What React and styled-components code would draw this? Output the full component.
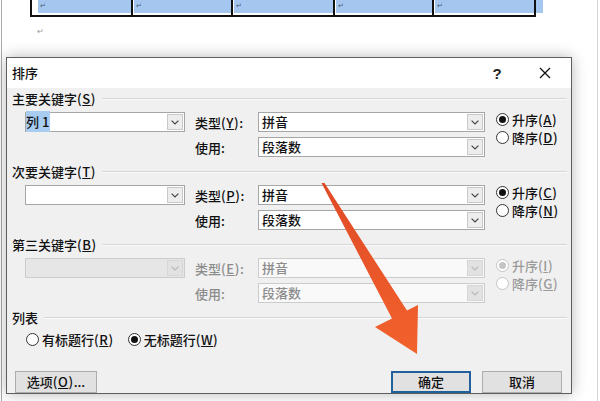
import React from "react";
import styled, { createGlobalStyle } from "styled-components";

const FONT = `"Noto Sans CJK SC", "Noto Sans CJK JP", "Noto Sans", sans-serif`;

const Global = createGlobalStyle`
  html, body { margin: 0; padding: 0; background: #fff; }
  body { font-family: ${FONT}; }
`;

const Page = styled.div`
  position: relative;
  width: 600px;
  height: 401px;
  overflow: hidden;
  background: #fff;
`;

const Paper = styled.div`
  box-sizing: border-box;
  height: 100%;
  margin: 0 2px 0 1px;
  border-left: 1px solid #a8a8a8;
  border-right: 1px solid #d4d4d4;
`;

const DocRow = styled.div`
  display: flex;
  margin-left: 28px;
  height: 17px;
`;

const DocCell = styled.div`
  box-sizing: border-box;
  width: ${(p) => p.$w}px;
  border-bottom: 2px solid #111;
  border-right: 2px solid #111;
  ${(p) => (p.$first ? "border-left: 2px solid #111;" : "")}
  padding: 0 0 2px ${(p) => (p.$first ? 6 : 1)}px;
`;

const CellFill = styled.div`
  height: 13px;
  background: #a4c6ef;
  font-size: 7px;
  line-height: 11px;
  color: #4a5a70;
  padding-left: 2px;
`;

const RowEnd = styled.div`
  width: 7px;
  height: 13px;
  background: #a4c6ef;
`;

const ParaMark = styled.div`
  margin: 9px 0 0 35px;
  font-size: 8px;
  line-height: 10px;
  color: #9a9a9a;
`;

const Dialog = styled.div`
  position: absolute;
  left: 6px;
  top: 57px;
  width: 566px;
  height: 337px;
  box-sizing: border-box;
  border: 1px solid #5e5e5e;
  background: #f0f0f0;
  box-shadow: 0 0 14px rgba(0, 0, 0, 0.28);
  display: flex;
  flex-direction: column;
  font-family: ${FONT};
  font-size: 13px;
  font-weight: 500;
  color: #111;
`;

const TitleBar = styled.div`
  height: 30px;
  flex: none;
  display: flex;
  align-items: center;
  background: #fff;
  padding-left: 5px;
`;

const Title = styled.span`
  font-size: 13px;
  line-height: 16px;
`;

const TitleButtons = styled.div`
  margin-left: auto;
  margin-right: 2px;
  display: flex;
`;

const TitleButton = styled.div`
  width: 48px;
  height: 30px;
  display: flex;
  align-items: center;
  justify-content: center;
  font-size: 15px;
  font-weight: 700;
  font-family: "Liberation Sans", sans-serif;
  color: #222;
`;

const Body = styled.div`
  flex: 1;
  display: flex;
  flex-direction: column;
  padding: 3px 4px 6px 5px;
`;

const Section = styled.section`
  margin-bottom: 7px;
`;

const GroupHead = styled.div`
  display: flex;
  align-items: center;
  height: 16px;
  line-height: 16px;
  white-space: nowrap;
  &::after {
    content: "";
    flex: 1;
    margin-left: 6px;
    border-top: 1px solid #d6d6d6;
    border-bottom: 1px solid #fbfbfb;
  }
`;

const Accel = styled.span`
  letter-spacing: 0.6px;
`;

const KeyGrid = styled.div`
  display: grid;
  grid-template-columns: 13px 160px 73px 227px 1fr;
  grid-template-rows: 20px 20px;
  row-gap: 5px;
  margin-top: 5px;
`;

const Label = styled.div`
  grid-column: 3;
  grid-row: ${(p) => p.$row};
  display: flex;
  align-items: center;
  padding-left: 10px;
  white-space: nowrap;
  color: ${(p) => (p.$disabled ? "#8c8c8c" : "#111")};
`;

const Combo = styled.div`
  grid-column: ${(p) => p.$col};
  grid-row: ${(p) => p.$row};
  box-sizing: border-box;
  height: 20px;
  display: flex;
  border: 1px solid ${(p) => (p.$disabled ? "#cccccc" : "#a6a6a6")};
  background: ${(p) => (p.$disabled ? (p.$shade ? "#e6e6e6" : "#f9f9f9") : "#fff")};
`;

const ComboText = styled.div`
  flex: 1;
  padding-left: ${(p) => p.$pad ?? 3}px;
  line-height: 18px;
  white-space: nowrap;
  color: ${(p) => (p.$disabled ? "#8c8c8c" : "#111")};
`;

const Selected = styled.span`
  background: #a9ccf1;
  padding: 1px 1px 1px 0;
`;

const DropButton = styled.div`
  box-sizing: border-box;
  width: 16px;
  margin: 1px 1px 1px 0;
  border: 1px solid ${(p) => (p.$disabled ? "#d6d6d6" : "#c9c9c9")};
  background: ${(p) => (p.$disabled ? "#e2e2e2" : "#ededed")};
  display: flex;
  align-items: center;
  justify-content: center;
`;

const RadioCol = styled.div`
  grid-column: 5;
  grid-row: 1 / 3;
  padding-left: 11px;
  margin-top: -2px;
  display: flex;
  flex-direction: column;
`;

const RadioItem = styled.div`
  height: 18px;
  display: flex;
  align-items: center;
  gap: 3px;
  white-space: nowrap;
  color: ${(p) => (p.$disabled ? "#9a9a9a" : "#111")};
`;

const RadioCircle = styled.span`
  box-sizing: border-box;
  width: 13px;
  height: 13px;
  flex: none;
  border-radius: 50%;
  border: 1px solid ${(p) => (p.$disabled ? "#c4c4c4" : "#333")};
  background: #fff;
  display: flex;
  align-items: center;
  justify-content: center;
  &::after {
    content: "";
    display: ${(p) => (p.$checked ? "block" : "none")};
    width: 7px;
    height: 7px;
    border-radius: 50%;
    background: ${(p) => (p.$disabled ? "#c4c4c4" : "#111")};
  }
`;

const RadioRow = styled.div`
  display: flex;
  gap: 14px;
  margin-top: 4px;
  padding-left: 14px;
  height: 16px;
`;

const ButtonRow = styled.div`
  margin-top: 18px;
  display: flex;
  justify-content: space-between;
  padding: 0 5px 0 3px;
`;

const ButtonGroup = styled.div`
  display: flex;
  gap: 11px;
`;

const Button = styled.button`
  box-sizing: border-box;
  height: 22px;
  width: ${(p) => p.$w}px;
  padding: 0;
  margin: 0;
  font-family: ${FONT};
  font-size: 13px;
  font-weight: 500;
  line-height: 16px;
  color: #111;
  background: #e1e1e1;
  border: ${(p) => (p.$primary ? "2px solid #22609c" : "1px solid #adadad")};
  display: flex;
  align-items: center;
  justify-content: center;
`;

const ArrowLayer = styled.svg`
  position: absolute;
  left: 0;
  top: 0;
  pointer-events: none;
`;

const Chevron = ({ disabled }) => (
  <svg width="8" height="5" viewBox="0 0 8 5">
    <polyline
      points="0.6,0.6 4,4 7.4,0.6"
      fill="none"
      stroke={disabled ? "#b8b8b8" : "#444"}
      strokeWidth="1.2"
    />
  </svg>
);

const Radio = ({ checked, disabled, children }) => (
  <RadioItem $disabled={disabled}>
    <RadioCircle $checked={checked} $disabled={disabled} />
    <span>{children}</span>
  </RadioItem>
);

const Key = ({ k }) => (
  <Accel>
    (<u>{k}</u>)
  </Accel>
);

const KeySection = ({ title, accel, keyText, typeAccel, ascAccel, descAccel, disabled }) => (
  <Section>
    <GroupHead>
      {title}
      <Key k={accel} />
    </GroupHead>
    <KeyGrid>
      <Combo $col={2} $row={1} $disabled={disabled} $shade>
        <ComboText $pad={keyText ? 0 : 3}>
          {keyText ? <Selected>{keyText}</Selected> : null}
        </ComboText>
        <DropButton $disabled={disabled}>
          <Chevron disabled={disabled} />
        </DropButton>
      </Combo>
      <Label $row={1} $disabled={disabled}>
        类型<Key k={typeAccel} />:
      </Label>
      <Combo $col={4} $row={1} $disabled={disabled}>
        <ComboText $disabled={disabled}>拼音</ComboText>
        <DropButton $disabled={disabled}>
          <Chevron disabled={disabled} />
        </DropButton>
      </Combo>
      <Label $row={2} $disabled={disabled}>
        使用:
      </Label>
      <Combo $col={4} $row={2} $disabled={disabled}>
        <ComboText $disabled={disabled}>段落数</ComboText>
        <DropButton $disabled={disabled}>
          <Chevron disabled={disabled} />
        </DropButton>
      </Combo>
      <RadioCol>
        <Radio checked disabled={disabled}>
          升序<Key k={ascAccel} />
        </Radio>
        <Radio disabled={disabled}>
          降序<Key k={descAccel} />
        </Radio>
      </RadioCol>
    </KeyGrid>
  </Section>
);

const cells = [
  { w: 103, first: true },
  { w: 100 },
  { w: 102 },
  { w: 99 },
  { w: 102 },
];

export default function App() {
  return (
    <>
      <Global />
      <Page>
        <Paper>
          <DocRow>
            {cells.map((c, i) => (
              <DocCell key={i} $w={c.w} $first={c.first}>
                <CellFill>↵</CellFill>
              </DocCell>
            ))}
            <RowEnd />
          </DocRow>
          <ParaMark>↵</ParaMark>
        </Paper>

        <Dialog>
          <TitleBar>
            <Title>排序</Title>
            <TitleButtons>
              <TitleButton>?</TitleButton>
              <TitleButton>
                <svg width="12" height="12" viewBox="0 0 12 12">
                  <path d="M1 1 L11 11 M11 1 L1 11" stroke="#111" strokeWidth="1.3" fill="none" />
                </svg>
              </TitleButton>
            </TitleButtons>
          </TitleBar>
          <Body>
            <KeySection title="主要关键字" accel="S" keyText="列 1" typeAccel="Y" ascAccel="A" descAccel="D" />
            <KeySection title="次要关键字" accel="T" typeAccel="P" ascAccel="C" descAccel="N" />
            <KeySection title="第三关键字" accel="B" typeAccel="E" ascAccel="I" descAccel="G" disabled />
            <Section>
              <GroupHead>列表</GroupHead>
              <RadioRow>
                <Radio>
                  有标题行<Key k="R" />
                </Radio>
                <Radio checked>
                  无标题行<Key k="W" />
                </Radio>
              </RadioRow>
            </Section>
            <ButtonRow>
              <Button $w={82}>
                选项<Key k="O" />...
              </Button>
              <ButtonGroup>
                <Button $w={80} $primary>
                  确定
                </Button>
                <Button $w={80}>取消</Button>
              </ButtonGroup>
            </ButtonRow>
          </Body>
        </Dialog>

        <ArrowLayer width="600" height="401" viewBox="0 0 600 401">
          <defs>
            <linearGradient id="arrowGrad" x1="0" y1="0" x2="0" y2="1">
              <stop offset="0" stopColor="#e04a26" />
              <stop offset="1" stopColor="#f2622c" />
            </linearGradient>
          </defs>
          <polygon
            points="321.5,183 324.5,183 407,310.6 418,305 417,354 375,327 392,318.4"
            fill="url(#arrowGrad)"
          />
        </ArrowLayer>
      </Page>
    </>
  );
}
